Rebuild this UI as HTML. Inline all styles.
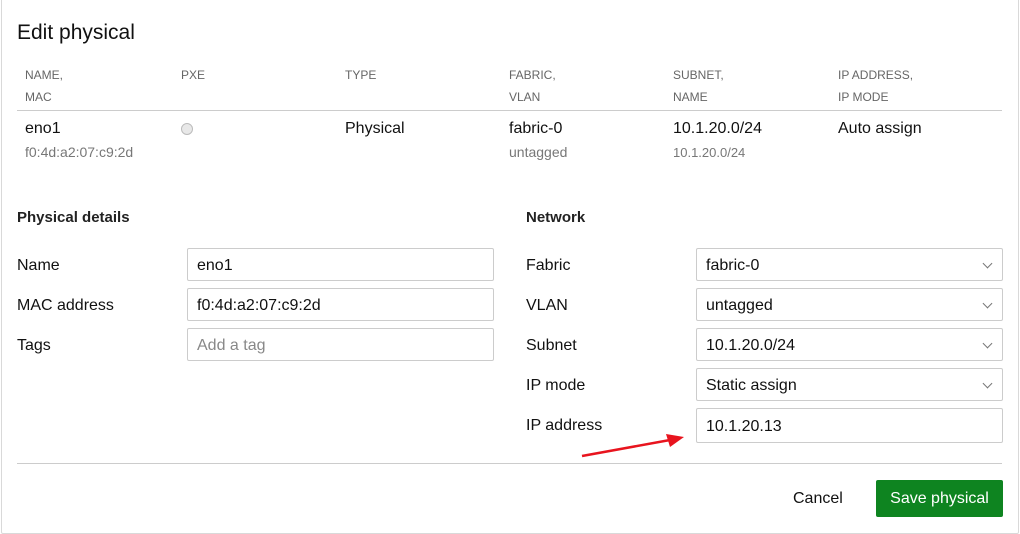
<!DOCTYPE html>
<html><head><style>
body{margin:0;width:1020px;height:534px;background:#fff;font-family:"Liberation Sans",sans-serif;color:#111;position:relative;overflow:hidden}
.frame{position:absolute;left:1px;top:-2px;width:1016px;height:534px;border:1px solid #d9d9d9;border-radius:2px}
.a{position:absolute;white-space:nowrap}
.h{font-size:12px;color:#666;line-height:22px}
.s{font-size:14px;color:#777}
.t{font-size:16px}
.in{position:absolute;height:33px;border:1px solid #ccc;border-radius:2px;box-sizing:border-box;font-size:16px;line-height:33px;padding-left:9px;color:#111}
.ch{position:absolute;right:11px;top:11px;width:6px;height:6px;border-right:1px solid #777;border-bottom:1px solid #777;transform:rotate(45deg)}
</style></head><body>
<div class="frame"></div>
<div class="a" style="left:17px;top:21px;font-size:21px;color:#111">Edit physical</div>
<div class="a h" style="left:25px;top:64px">NAME,<br>MAC</div>
<div class="a h" style="left:181px;top:64px">PXE</div>
<div class="a h" style="left:345px;top:64px">TYPE</div>
<div class="a h" style="left:509px;top:64px">FABRIC,<br>VLAN</div>
<div class="a h" style="left:673px;top:64px">SUBNET,<br>NAME</div>
<div class="a h" style="left:838px;top:64px">IP ADDRESS,<br>IP MODE</div>
<div class="a" style="left:17px;top:110px;width:985px;border-top:1px solid #ccc"></div>
<div class="a t" style="left:25px;top:120px">eno1</div>
<div class="a s" style="left:25px;top:144px">f0:4d:a2:07:c9:2d</div>
<div class="a" style="left:181px;top:123px;width:10px;height:10px;border:1px solid #bbb;border-radius:50%;background:#e8e8e8"></div>
<div class="a t" style="left:345px;top:120px">Physical</div>
<div class="a t" style="left:509px;top:120px">fabric-0</div>
<div class="a s" style="left:509px;top:144px">untagged</div>
<div class="a t" style="left:673px;top:120px">10.1.20.0/24</div>
<div class="a" style="left:673px;top:145px;font-size:13px;color:#777">10.1.20.0/24</div>
<div class="a t" style="left:838px;top:120px">Auto assign</div>

<div class="a t" style="left:17px;top:209px;font-weight:bold;font-size:15px;color:#222">Physical details</div>
<div class="a t" style="left:526px;top:209px;font-weight:bold;font-size:15px;color:#222">Network</div>

<div class="a t" style="left:17px;top:257px">Name</div>
<div class="a t" style="left:17px;top:297px">MAC address</div>
<div class="a t" style="left:17px;top:337px">Tags</div>
<div class="in" style="left:187px;top:248px;width:307px">eno1</div>
<div class="in" style="left:187px;top:288px;width:307px">f0:4d:a2:07:c9:2d</div>
<div class="in" style="left:187px;top:328px;width:307px;color:#888">Add a tag</div>

<div class="a t" style="left:526px;top:257px">Fabric</div>
<div class="a t" style="left:526px;top:297px">VLAN</div>
<div class="a t" style="left:526px;top:337px">Subnet</div>
<div class="a t" style="left:526px;top:377px">IP mode</div>
<div class="a t" style="left:526px;top:417px">IP address</div>
<div class="in" style="left:696px;top:248px;width:307px">fabric-0<span class="ch"></span></div>
<div class="in" style="left:696px;top:288px;width:307px">untagged<span class="ch"></span></div>
<div class="in" style="left:696px;top:328px;width:307px">10.1.20.0/24<span class="ch"></span></div>
<div class="in" style="left:696px;top:368px;width:307px">Static assign<span class="ch"></span></div>
<div class="in" style="left:696px;top:408px;width:307px;height:35px;line-height:35px">10.1.20.13</div>

<svg class="a" style="left:578px;top:430px" width="110" height="30"><line x1="4" y1="26" x2="92" y2="10" stroke="#e8141e" stroke-width="2.5"/><polygon points="106,7 88,4 92,17" fill="#e8141e"/></svg>

<div class="a" style="left:17px;top:463px;width:985px;border-top:1px solid #ccc"></div>
<div class="a t" style="left:793px;top:490px">Cancel</div>
<div class="a" style="left:876px;top:480px;width:127px;height:37px;background:#0e8420;border-radius:2px;color:#fff;font-size:16px;line-height:38px;text-align:center">Save physical</div>
</body></html>
